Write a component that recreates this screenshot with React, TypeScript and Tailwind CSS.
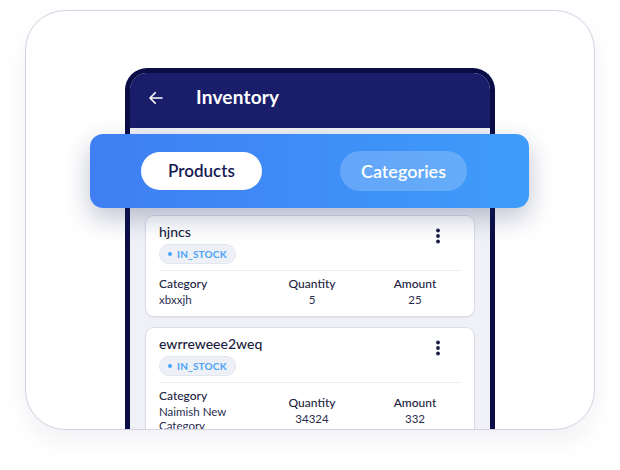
import React from "react";

const font = { fontFamily: "Lato, 'Noto Sans', sans-serif" };

function Dots() {
  return (
    <svg width="6" height="16" viewBox="0 0 6 16" className="mt-[2px]">
      <circle cx="3" cy="2.5" r="1.9" fill="#1a1d45" />
      <circle cx="3" cy="8" r="1.9" fill="#1a1d45" />
      <circle cx="3" cy="13.5" r="1.9" fill="#1a1d45" />
    </svg>
  );
}

function Card({ name, category, qty, amount }: { name: string; category: string[]; qty: string; amount: string }) {
  return (
    <div className="bg-white rounded-[9px] border border-[#dcdde7] px-[13px] pt-[7px] pb-[9px] shadow-[0_1px_2px_rgba(20,20,60,0.06)]">
      <div className="flex justify-between items-start">
        <div className="flex flex-col">
          <div className="text-[14px] leading-[17px] text-[#1a1d40] font-medium">{name}</div>
          <div className="mt-[4px] self-start flex items-center gap-[5px] h-[20px] px-[8px] rounded-full bg-[#eef0f7] border border-[#e4e6ee]">
            <span className="w-[4px] h-[4px] rounded-full bg-[#4ba3f5]" />
            <span className="text-[10px] font-bold tracking-[0.2px] text-[#4ba3f5]">IN_STOCK</span>
          </div>
        </div>
        <div className="pr-[20px] pt-[3px]">
          <Dots />
        </div>
      </div>
      <div className="h-px bg-[#ecedf2] mt-[6px]" />
      <div className="flex items-center mt-[5px]">
        <div className="w-[128px] flex flex-col text-[#1a1d40]">
          <div className="text-[12px] leading-[15px] font-medium">Category</div>
          <div className="mt-[2px] text-[11.5px] leading-[14px] text-[#2a2d50]">
            {category.map((c, i) => (
              <div key={i}>{c}</div>
            ))}
          </div>
        </div>
        <div className="w-[50px] flex flex-col items-center text-[#1a1d40]">
          <div className="text-[12px] leading-[15px] font-medium">Quantity</div>
          <div className="mt-[2px] text-[11.5px] leading-[14px] text-[#2a2d50]">{qty}</div>
        </div>
        <div className="w-[53px]" />
        <div className="w-[50px] flex flex-col items-center text-[#1a1d40]">
          <div className="text-[12px] leading-[15px] font-medium">Amount</div>
          <div className="mt-[2px] text-[11.5px] leading-[14px] text-[#2a2d50]">{amount}</div>
        </div>
      </div>
    </div>
  );
}

export default function App() {
  return (
    <div className="w-[620px] h-[470px] bg-white pt-[10px] pl-[25px]" style={font}>
      <div className="relative w-[570px] h-[420px] rounded-[40px] border border-[#d3d1e3] bg-white overflow-hidden shadow-[0_12px_24px_rgba(40,40,90,0.06)]">
        <div className="ml-[99px] mt-[57px] w-[370px] h-[400px] rounded-t-[22px] border-[5px] border-b-0 border-[#0b0d47] bg-[#f0f1f7] overflow-hidden">
          <div className="h-[55px] bg-[#1a1e6a] flex items-center pl-[17px] pb-[6px]">
            <svg width="18" height="18" viewBox="0 0 24 24" fill="none" stroke="white" strokeWidth="2.2" strokeLinecap="round" strokeLinejoin="round">
              <path d="M20 12H5" />
              <path d="M11 5l-7 7 7 7" />
            </svg>
            <div className="ml-[31px] text-[19px] font-bold text-white tracking-[0.2px]">Inventory</div>
          </div>
          <div className="px-[15px] pt-[87px] flex flex-col gap-[10px]">
            <Card name="hjncs" category={["xbxxjh"]} qty="5" amount="25" />
            <Card name="ewrreweee2weq" category={["Naimish New", "Category"]} qty="34324" amount="332" />
          </div>
        </div>
        <div className="absolute left-[64px] top-[123px] w-[439px] h-[74px] rounded-[13px] bg-gradient-to-r from-[#3f7ef3] to-[#3e9cf9] shadow-[0_10px_26px_rgba(30,40,90,0.28)] flex items-center">
          <div className="ml-[51px] w-[121px] h-[38px] rounded-full bg-white flex items-center justify-center text-[17px] font-semibold text-[#161a52]">
            Products
          </div>
          <div className="ml-[78px] w-[127px] h-[40px] rounded-full bg-white/20 flex items-center justify-center text-[18px] font-semibold text-white">
            Categories
          </div>
        </div>
      </div>
    </div>
  );
}
